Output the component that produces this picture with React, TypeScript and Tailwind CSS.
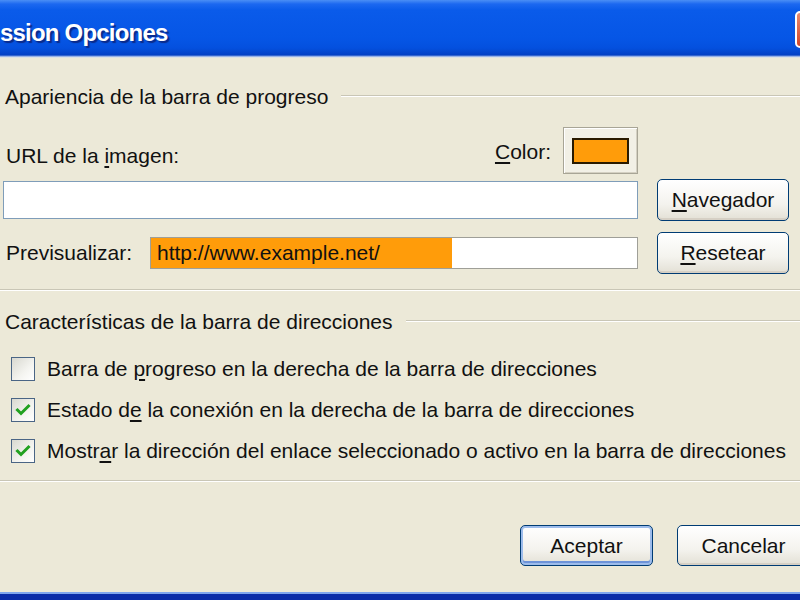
import React from 'react';

const XpButton = ({ children, isDefault = false, className = '' }: { children: React.ReactNode; isDefault?: boolean; className?: string }) => (
  <div
    className={`flex items-center justify-center rounded-[5px] border border-[#003C74] bg-[linear-gradient(to_bottom,#FFFFFF_0%,#F4F3EE_60%,#E3E0D5_100%)] ${
      isDefault ? 'shadow-[inset_0_0_0_2px_#9DBCEB,inset_0_-2px_0_2px_#6D93D8]' : 'shadow-[inset_0_-2px_0_#D6D0C5]'
    } ${className}`}
  >
    {children}
  </div>
);

const GroupTitle = ({ text }: { text: string }) => (
  <div className="flex items-center h-[20px] pl-[5px]">
    <span className="whitespace-nowrap">{text}</span>
    <div className="flex-1 ml-[13px] mt-[-2px] border-t border-[#C9C6B6] border-b border-b-white" />
  </div>
);

const Separator = () => <div className="w-full border-t border-[#C9C6B6] border-b border-b-white" />;

const CheckBox = ({ checked }: { checked: boolean }) => (
  <div className="w-[24px] h-[24px] shrink-0 border border-[#4A6585] bg-[linear-gradient(135deg,#D8D8D0_0%,#F4F4F0_60%,#FFFFFF_100%)] flex items-center justify-center">
    {checked && (
      <svg width="16" height="16" viewBox="0 0 16 16">
        <path d="M2.5 8 L6 11.5 L13.5 4" fill="none" stroke="#21A121" strokeWidth="3" strokeLinecap="square" />
      </svg>
    )}
  </div>
);

const App = () => {
  const options = [
    { checked: false, before: 'Barra de ', key: 'p', after: 'rogreso en la derecha de la barra de direcciones' },
    { checked: true, before: 'Estado d', key: 'e', after: ' la conexión en la derecha de la barra de direcciones' },
    { checked: true, before: 'Mostr', key: 'a', after: 'r la dirección del enlace seleccionado o activo en la barra de direcciones' },
  ];

  return (
    <div className="w-[800px] h-[600px] overflow-hidden bg-[#ECE9D8] flex flex-col font-['Liberation_Sans',Arial,sans-serif] text-[21px] text-[#111]">
      {/* title bar */}
      <div className="relative h-[58px] shrink-0 bg-[linear-gradient(to_bottom,#4A8EF5_0px,#1C68F0_4px,#0A5BEA_10px,#0656E6_38px,#0450DE_48px,#0340C4_55px,#C9D8F2_57px,#ECE9D8_58px)]">
        <div className="absolute left-[0px] top-[15px] text-white font-bold text-[24px] tracking-[-0.8px] [text-shadow:2px_2px_1px_#0A2A8A]">
          ssion Opciones
        </div>
        <div className="absolute right-[-32px] top-[11px] w-[37px] h-[37px] rounded-[5px] border-2 border-white bg-[linear-gradient(to_bottom,#E88A6E,#D2462A)]" />
      </div>

      {/* apariencia */}
      <div className="pt-[29px]">
        <GroupTitle text="Apariencia de la barra de progreso" />

        <div className="flex mt-[20px] h-[47px]">
          <div className="w-[635px] ml-[3px] flex justify-between">
            <span className="self-end mb-[3px] pl-[3px]">
              URL de la <span className="underline underline-offset-[3px]">i</span>magen:
            </span>
            <div className="flex items-center">
              <span className="mt-[2px]">
                <span className="underline underline-offset-[3px]">C</span>olor:
              </span>
              <div className="ml-[12px] w-[75px] h-[47px] border border-[#A8A596] bg-[#F2F0E6] shadow-[inset_1px_1px_0_#FFFFFF,inset_-1px_-1px_0_#D4D0C2] flex items-center justify-center">
                <div className="w-[57px] h-[26px] border-2 border-[#2A1A00] bg-[#FF9C0A]" />
              </div>
            </div>
          </div>
        </div>

        <div className="flex items-center mt-[5px] h-[42px]">
          <div className="w-[635px] ml-[3px] h-[38px] border border-[#7F9DB9] bg-white" />
          <XpButton className="ml-[19px] w-[132px] h-[42px]">
            <span>
              <span className="underline underline-offset-[3px]">N</span>avegador
            </span>
          </XpButton>
        </div>

        <div className="flex items-center mt-[11px] h-[42px]">
          <div className="w-[635px] ml-[3px] flex items-center">
            <span className="w-[147px] pl-[3px]">Previsualizar:</span>
            <div className="w-[488px] h-[32px] border border-[#9F9F98] bg-white flex">
              <div className="w-[301px] bg-[#FF9C0A] pl-[6px] flex items-center">http://www.example.net/</div>
            </div>
          </div>
          <XpButton className="ml-[19px] w-[132px] h-[42px]">
            <span>
              <span className="underline underline-offset-[3px]">R</span>esetear
            </span>
          </XpButton>
        </div>
      </div>

      <div className="mt-[15px]">
        <Separator />
      </div>

      {/* direcciones */}
      <div className="mt-[21px]">
        <GroupTitle text="Características de la barra de direcciones" />
        <div className="mt-[25px] flex flex-col gap-[17px] pl-[11px]">
          {options.map((o, i) => (
            <div key={i} className="flex items-center h-[24px] gap-[12px]">
              <CheckBox checked={o.checked} />
              <span className="whitespace-nowrap">
                {o.before}
                <span className="underline underline-offset-[3px]">{o.key}</span>
                {o.after}
              </span>
            </div>
          ))}
        </div>
      </div>

      <div className="mt-[17px]">
        <Separator />
      </div>

      <div className="flex justify-end gap-[24px] mt-[43px] mr-[-10px]">
        <XpButton isDefault className="w-[133px] h-[41px]">Aceptar</XpButton>
        <XpButton className="w-[133px] h-[41px]">Cancelar</XpButton>
      </div>

      <div className="flex-1" />
      <div className="h-[8px] shrink-0 border-t-2 border-[#7FA6EE] bg-[#0A2CA8]" />
    </div>
  );
};

export default App;
